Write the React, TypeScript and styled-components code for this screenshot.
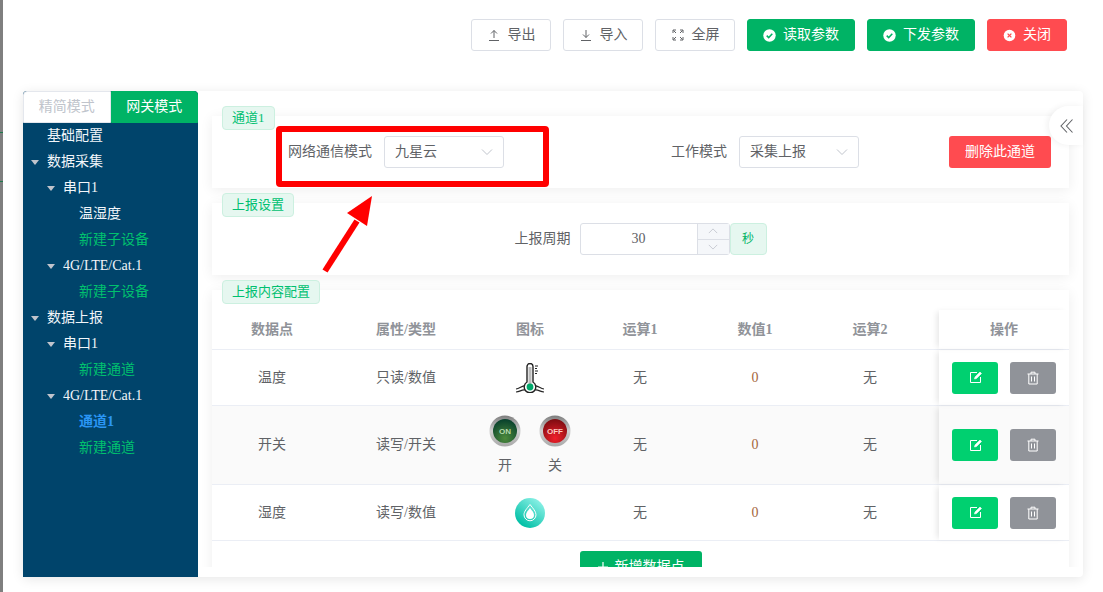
import React from 'react';
import styled, {createGlobalStyle} from 'styled-components';

const Global = createGlobalStyle`
  html, body {
    margin: 0;
    padding: 0;
    background: #fff;
    font-family: "Liberation Serif", "Noto Sans CJK SC", serif;
    font-size: 14px;
    line-height: 20px;
    color: #606266;
  }
  * {
    box-sizing: border-box;
  }
`;

const GREEN = '#00b365';
const RED = '#ff4b50';

const Page = styled.div`
  position: relative;
  width: 1103px;
  height: 592px;
  overflow: hidden;
  padding-left: 23px;
`;

// sliver of the window behind, with two of its table lines showing
const BackStrip = styled.div`
  position: absolute;
  left: 0;
  top: 0;
  bottom: 0;
  width: 3px;
  background:
    linear-gradient(#1f7a4d, #1f7a4d) 0 132px / 3px 1px no-repeat,
    linear-gradient(#1f7a4d, #1f7a4d) 0 181px / 3px 1px no-repeat,
    #7f7f7f;
`;

const Toolbar = styled.div`
  display: flex;
  justify-content: flex-end;
  gap: 12px;
  height: 91px;
  padding: 19px 36px 0 0;
`;

const ToolButton = styled.button<{$tone?: 'plain' | 'green' | 'red'; $wide?: boolean}>`
  display: inline-flex;
  align-items: center;
  justify-content: center;
  gap: 7px;
  width: ${p => (p.$wide ? 108 : 80)}px;
  height: 32px;
  padding: 0;
  border-radius: 3px;
  font: inherit;
  border: 1px solid
    ${p => (p.$tone === 'green' ? GREEN : p.$tone === 'red' ? RED : '#dcdfe6')};
  background: ${p =>
    p.$tone === 'green' ? GREEN : p.$tone === 'red' ? RED : '#fff'};
  color: ${p => (p.$tone && p.$tone !== 'plain' ? '#fff' : '#606266')};
`;

const Card = styled.div`
  position: relative;
  display: flex;
  width: 1060px;
  height: 486px;
  border-radius: 4px;
  background: #fff;
  box-shadow: 0 2px 12px rgba(0, 0, 0, 0.1);
`;

const Side = styled.div`
  display: flex;
  flex-direction: column;
  width: 175px;
  flex: none;
  background: #00446b;
  border-radius: 4px 4px 0 0;
`;

const Tabs = styled.div`
  display: flex;
  height: 32px;
  flex: none;
`;

const Tab = styled.div<{$active?: boolean}>`
  flex: 1;
  display: flex;
  align-items: center;
  justify-content: center;
  background: ${p => (p.$active ? GREEN : '#fff')};
  color: ${p => (p.$active ? '#fff' : '#c0c4cc')};
  border: 1px solid ${p => (p.$active ? GREEN : '#e4e7ed')};
  border-radius: ${p => (p.$active ? '0 4px 0 0' : '4px 0 0 0')};
`;

const TreeRow = styled.div<{$level: number; $tone?: 'green' | 'active'}>`
  position: relative;
  height: 26px;
  line-height: 25px;
  padding-left: ${p => 24 + p.$level * 16}px;
  color: ${p =>
    p.$tone === 'green' ? '#00c16e' : p.$tone === 'active' ? '#2a96f5' : '#f2f6fa'};
  font-weight: ${p => (p.$tone === 'active' ? 700 : 400)};
  white-space: nowrap;
`;

const Caret = styled.i<{$level: number}>`
  position: absolute;
  top: 11px;
  left: ${p => 8 + p.$level * 16}px;
  width: 0;
  height: 0;
  border-left: 4px solid transparent;
  border-right: 4px solid transparent;
  border-top: 5px solid #c0c4cc;
`;

const Main = styled.div`
  flex: 1;
  height: 476px;
  overflow: hidden;
  padding: 25px 14px 0;
  display: flex;
  flex-direction: column;
  gap: 15px;
`;

const Panel = styled.div`
  position: relative;
  flex: none;
  background: #fff;
  box-shadow: 0 2px 12px rgba(0, 0, 0, 0.07);
`;

const ControlPanel = styled(Panel)<{$center?: boolean}>`
  display: flex;
  align-items: center;
  height: 72px;
  justify-content: ${p => (p.$center ? 'center' : 'flex-start')};
  padding-left: ${p => (p.$center ? 0 : 76)}px;
`;

const PanelTag = styled.div`
  position: absolute;
  top: -10px;
  left: 10px;
  z-index: 2;
  height: 24px;
  line-height: 22px;
  padding: 0 9px;
  font-size: 13px;
  color: #00c070;
  background: #e6f7f0;
  border: 1px solid #ccf0e0;
  border-radius: 4px;
`;

const FieldLabel = styled.label<{$push?: number}>`
  margin-left: ${p => p.$push ?? 0}px;
  margin-right: 12px;
`;

const Select = styled.div`
  display: flex;
  align-items: center;
  justify-content: space-between;
  width: 120px;
  height: 32px;
  padding: 0 10px;
  background: #fff;
  border: 1px solid #dcdfe6;
  border-radius: 3px;
  color: #606266;
`;

const DeleteButton = styled.button`
  width: 102px;
  height: 32px;
  margin-left: 90px;
  padding: 0;
  font: inherit;
  color: #fff;
  background: ${RED};
  border: 0;
  border-radius: 3px;
`;

const NumberBox = styled.div`
  display: flex;
  width: 150px;
  height: 32px;
  margin-left: -3px;
  border: 1px solid #dcdfe6;
  border-radius: 3px;
`;

const NumberValue = styled.div`
  flex: 1;
  display: flex;
  align-items: center;
  justify-content: center;
  color: #606266;
`;

const Stepper = styled.div`
  display: flex;
  flex-direction: column;
  width: 32px;
  border-left: 1px solid #dcdfe6;
  background: #f5f7fa;
  color: #c0c4cc;
`;

const StepCell = styled.div`
  flex: 1;
  display: flex;
  align-items: center;
  justify-content: center;
  & + & {
    border-top: 1px solid #dcdfe6;
  }
`;

const Unit = styled.div`
  display: flex;
  align-items: center;
  justify-content: center;
  width: 37px;
  height: 32px;
  font-size: 12px;
  color: #00b365;
  background: #e6f7f0;
  border: 1px solid #ccf0e0;
  border-radius: 4px;
`;

const TablePanel = styled(Panel)`
  padding-top: 20px;
  height: 300px;
`;

const Row = styled.div<{$height: number; $striped?: boolean}>`
  display: grid;
  grid-template-columns: 120px 148px 100px 120px 110px 120px 9px 130px;
  height: ${p => p.$height}px;
  border-bottom: 1px solid #ebeef5;
  background: ${p => (p.$striped ? '#fafafa' : '#fff')};
`;

const Cell = styled.div<{$head?: boolean; $value?: boolean}>`
  display: flex;
  align-items: center;
  justify-content: center;
  color: ${p => (p.$head ? '#909399' : p.$value ? '#a5663c' : '#606266')};
  font-weight: ${p => (p.$head ? 700 : 400)};
`;

const FixedCell = styled(Cell)`
  grid-column: 8;
  gap: 12px;
  box-shadow: -4px 0 6px -2px rgba(0, 0, 0, 0.1);
`;

const SwitchIcons = styled.div`
  display: grid;
  grid-template-columns: 50px 50px;
  justify-items: center;
  row-gap: 10px;
  font-size: 14px;
  line-height: 18px;
`;

const ActionButton = styled.button<{$kind: 'edit' | 'remove'}>`
  display: flex;
  align-items: center;
  justify-content: center;
  width: 46px;
  height: 32px;
  padding: 0;
  border: 0;
  border-radius: 3px;
  background: ${p => (p.$kind === 'edit' ? '#00d070' : '#909399')};
`;

const Footer = styled.div`
  display: flex;
  justify-content: center;
  padding-top: 10px;
`;

const AddButton = styled.button`
  display: inline-flex;
  align-items: center;
  justify-content: center;
  gap: 6px;
  width: 122px;
  height: 32px;
  padding: 0;
  font: inherit;
  color: #fff;
  background: ${GREEN};
  border: 0;
  border-radius: 3px;
`;

const Collapse = styled.div`
  position: absolute;
  top: 15px;
  right: 0;
  z-index: 3;
  display: flex;
  align-items: center;
  justify-content: center;
  width: 34px;
  height: 39px;
  padding-left: 2px;
  background: #fff;
  border-radius: 20px 0 0 20px;
  box-shadow: -2px 0 6px rgba(0, 0, 0, 0.06);
`;

const Annotation = styled.svg`
  position: absolute;
  left: 0;
  top: 0;
  z-index: 5;
  pointer-events: none;
`;

const Glyph = ({size = 14, color = 'currentColor', children}: {size?: number; color?: string; children: React.ReactNode}) => (
  <svg width={size} height={size} viewBox="0 0 14 14" fill="none" stroke={color} strokeWidth="1">
    {children}
  </svg>
);

const Export = () => (
  <Glyph color="#606266">
    <path d="M2 12.5h10M7 10V2.5M4 5.5l3-3 3 3" />
  </Glyph>
);
const Import = () => (
  <Glyph color="#606266">
    <path d="M2 12.5h10M7 2v7.5M4 6.5l3 3 3-3" />
  </Glyph>
);
const FullScreen = () => (
  <Glyph color="#606266">
    <path d="M2 5V2h3M9 2h3v3M2 9v3h3M12 9v3H9M2.5 2.5l2.5 2.5M11.5 2.5L9 5M2.5 11.5L5 9M11.5 11.5L9 9" />
  </Glyph>
);
const Success = ({color}: {color: string}) => (
  <svg width="13" height="13" viewBox="0 0 13 13">
    <circle cx="6.5" cy="6.5" r="6.2" fill="#fff" />
    <path d="M3.7 6.6l2 2 3.6-3.8" fill="none" stroke={color} strokeWidth="1.5" />
  </svg>
);
const Failure = () => (
  <svg width="13" height="13" viewBox="0 0 13 13">
    <circle cx="6.5" cy="6.5" r="5.8" fill="#fff" />
    <path d="M4.6 4.6l3.8 3.8M8.4 4.6l-3.8 3.8" fill="none" stroke={RED} strokeWidth="1.3" />
  </svg>
);
const Chevron = ({up, size = 12}: {up?: boolean; size?: number}) => (
  <svg width={size} height={size} viewBox="0 0 12 12" fill="none" stroke="#c0c4cc" strokeWidth="1">
    <path d={up ? 'M1 8.5l5-5 5 5' : 'M1 3.5l5 5 5-5'} />
  </svg>
);
const Edit = () => (
  <svg width="13" height="13" viewBox="0 0 13 13" fill="none" stroke="#fff" strokeWidth="1">
    <path d="M8 1.5H1.5v10h10V6" />
    <path d="M5.5 8l.5-2 5-5 1.5 1.5-5 5z" fill="#fff" strokeWidth="0.6" />
  </svg>
);
const Trash = () => (
  <svg width="14" height="14" viewBox="0 0 14 14" fill="none" stroke="#fff" strokeWidth="1">
    <path d="M1.5 3h11M5 3V1.2h4V3M2.8 3v10h8.4V3M5.5 5.5V10.5M8.5 5.5V10.5" />
  </svg>
);
const Thermometer = () => (
  <svg width="30" height="30" viewBox="0 0 30 30" fill="none" stroke="#222">
    <path d="M15 21V4" stroke="#bdbdbd" strokeWidth="3" />
    <path d="M12 19V3.5a3 3 0 0 1 6 0V19a5.800 5.800 0 1 1-6 0z" strokeWidth="1.4" />
    <path d="M20 3h3M20 5.500h2M20 8h3M20 10.500h2" strokeWidth="1" />
    <path d="M1 26c3-.2 5.500-2.800 8-3.200M29 26c-3-.2-5.500-2.800-8-3.200M1 29c4-.2 5.500-2.600 9-2M29 29c-4-.2-5.500-2.600-9-2" strokeWidth="1.200" />
    <circle cx="15" cy="24" r="3.400" fill="#00a86b" stroke="none" />
  </svg>
);
const Lamp = ({on}: {on?: boolean}) => {
  const id = on ? 'lampOn' : 'lampOff';
  return (
    <svg width="32" height="32" viewBox="0 0 32 32">
      <defs>
        <linearGradient id={`${id}Ring`} x1="0" y1="0" x2="0" y2="1">
          <stop offset="0" stopColor="#7c7c7c" />
          <stop offset="0.5" stopColor="#d0d0d0" />
          <stop offset="1" stopColor="#a8a8a8" />
        </linearGradient>
        <radialGradient id={id} cx="0.5" cy="0.8" r="0.8">
          <stop offset="0" stopColor={on ? '#4d8a3c' : '#f0202a'} />
          <stop offset="1" stopColor={on ? '#063f2c' : '#7c0c10'} />
        </radialGradient>
      </defs>
      <circle cx="16" cy="16" r="15.500" fill={`url(#${id}Ring)`} />
      <circle cx="16" cy="16" r="12" fill={`url(#${id})`} />
      <text
        x="16"
        y="19"
        textAnchor="middle"
        fontSize="8"
        fontWeight="700"
        fontFamily="Liberation Sans, sans-serif"
        fill={on ? '#b5d8a8' : '#ffc9c0'}
      >
        {on ? 'ON' : 'OFF'}
      </text>
    </svg>
  );
};
const Drop = () => (
  <svg width="30" height="30" viewBox="0 0 30 30">
    <defs>
      <linearGradient id="dropFill" x1="0.2" y1="0.9" x2="0.8" y2="0.1">
        <stop offset="0" stopColor="#00bfa5" />
        <stop offset="1" stopColor="#86efe4" />
      </linearGradient>
    </defs>
    <circle cx="15" cy="15" r="15" fill="url(#dropFill)" />
    <path d="M15 6.500c3 4 6 6.800 6 10.300a6 6 0 0 1-12 0c0-3.500 3-6.300 6-10.300z" fill="none" stroke="#fff" strokeWidth="1" />
    <path d="M15 10c2 2.700 4 4.600 4 7a4 4 0 0 1-8 0c0-2.400 2-4.300 4-7z" fill="#fff" />
  </svg>
);

type TreeItem = {label: string; level: number; caret?: boolean; tone?: 'green' | 'active'};

const tree: TreeItem[] = [
  {label: '基础配置', level: 0},
  {label: '数据采集', level: 0, caret: true},
  {label: '串口1', level: 1, caret: true},
  {label: '温湿度', level: 2},
  {label: '新建子设备', level: 2, tone: 'green'},
  {label: '4G/LTE/Cat.1', level: 1, caret: true},
  {label: '新建子设备', level: 2, tone: 'green'},
  {label: '数据上报', level: 0, caret: true},
  {label: '串口1', level: 1, caret: true},
  {label: '新建通道', level: 2, tone: 'green'},
  {label: '4G/LTE/Cat.1', level: 1, caret: true},
  {label: '通道1', level: 2, tone: 'active'},
  {label: '新建通道', level: 2, tone: 'green'},
];

const rows = [
  {name: '温度', kind: '只读/数值', height: 56, icon: <Thermometer />},
  {
    name: '开关',
    kind: '读写/开关',
    height: 79,
    striped: true,
    icon: (
      <SwitchIcons>
        <Lamp on />
        <Lamp />
        <span>开</span>
        <span>关</span>
      </SwitchIcons>
    ),
  },
  {name: '湿度', kind: '读写/数值', height: 56, icon: <Drop />},
];

export default function App() {
  return (
    <Page>
      <Global />
      <BackStrip />
      <Toolbar>
        <ToolButton><Export />导出</ToolButton>
        <ToolButton><Import />导入</ToolButton>
        <ToolButton><FullScreen />全屏</ToolButton>
        <ToolButton $tone="green" $wide><Success color={GREEN} />读取参数</ToolButton>
        <ToolButton $tone="green" $wide><Success color={GREEN} />下发参数</ToolButton>
        <ToolButton $tone="red"><Failure />关闭</ToolButton>
      </Toolbar>
      <Card>
        <Side>
          <Tabs>
            <Tab>精简模式</Tab>
            <Tab $active>网关模式</Tab>
          </Tabs>
          {tree.map((item, i) => (
            <TreeRow key={i} $level={item.level} $tone={item.tone}>
              {item.caret && <Caret $level={item.level} />}
              {item.label}
            </TreeRow>
          ))}
        </Side>
        <Main>
          <ControlPanel>
            <PanelTag>通道1</PanelTag>
            <FieldLabel>网络通信模式</FieldLabel>
            <Select>九星云<Chevron /></Select>
            <FieldLabel $push={167}>工作模式</FieldLabel>
            <Select>采集上报<Chevron /></Select>
            <DeleteButton>删除此通道</DeleteButton>
          </ControlPanel>
          <ControlPanel $center>
            <PanelTag>上报设置</PanelTag>
            <FieldLabel>上报周期</FieldLabel>
            <NumberBox>
              <NumberValue>30</NumberValue>
              <Stepper>
                <StepCell><Chevron up size={10} /></StepCell>
                <StepCell><Chevron size={10} /></StepCell>
              </Stepper>
            </NumberBox>
            <Unit>秒</Unit>
          </ControlPanel>
          <TablePanel>
            <PanelTag>上报内容配置</PanelTag>
            <Row $height={40}>
              {['数据点', '属性/类型', '图标', '运算1', '数值1', '运算2'].map(h => (
                <Cell key={h} $head>{h}</Cell>
              ))}
              <FixedCell $head>操作</FixedCell>
            </Row>
            {rows.map(r => (
              <Row key={r.name} $height={r.height} $striped={r.striped}>
                <Cell>{r.name}</Cell>
                <Cell>{r.kind}</Cell>
                <Cell>{r.icon}</Cell>
                <Cell>无</Cell>
                <Cell $value>0</Cell>
                <Cell>无</Cell>
                <FixedCell>
                  <ActionButton $kind="edit"><Edit /></ActionButton>
                  <ActionButton $kind="remove"><Trash /></ActionButton>
                </FixedCell>
              </Row>
            ))}
            <Footer>
              <AddButton>
                <svg width="12" height="12" viewBox="0 0 12 12" stroke="#fff" strokeWidth="1.200">
                  <path d="M6 1v10M1 6h10" />
                </svg>
                新增数据点
              </AddButton>
            </Footer>
          </TablePanel>
        </Main>
        <Collapse>
          <svg width="16" height="16" viewBox="0 0 16 16" fill="none" stroke="#606266" strokeWidth="1.100">
            <path d="M8 1.500L2 8l6 6.500M13.500 1.500L7.500 8l6 6.500" />
          </svg>
        </Collapse>
      </Card>
      <Annotation width="1103" height="592" viewBox="0 0 1103 592">
        <rect x="279" y="129" width="267" height="55" rx="1" fill="none" stroke="#f00" strokeWidth="6" />
        <path d="M325 271L357 221" stroke="#f00" strokeWidth="6" fill="none" />
        <path d="M372 196L347 213L367 226z" fill="#f00" />
      </Annotation>
    </Page>
  );
}
